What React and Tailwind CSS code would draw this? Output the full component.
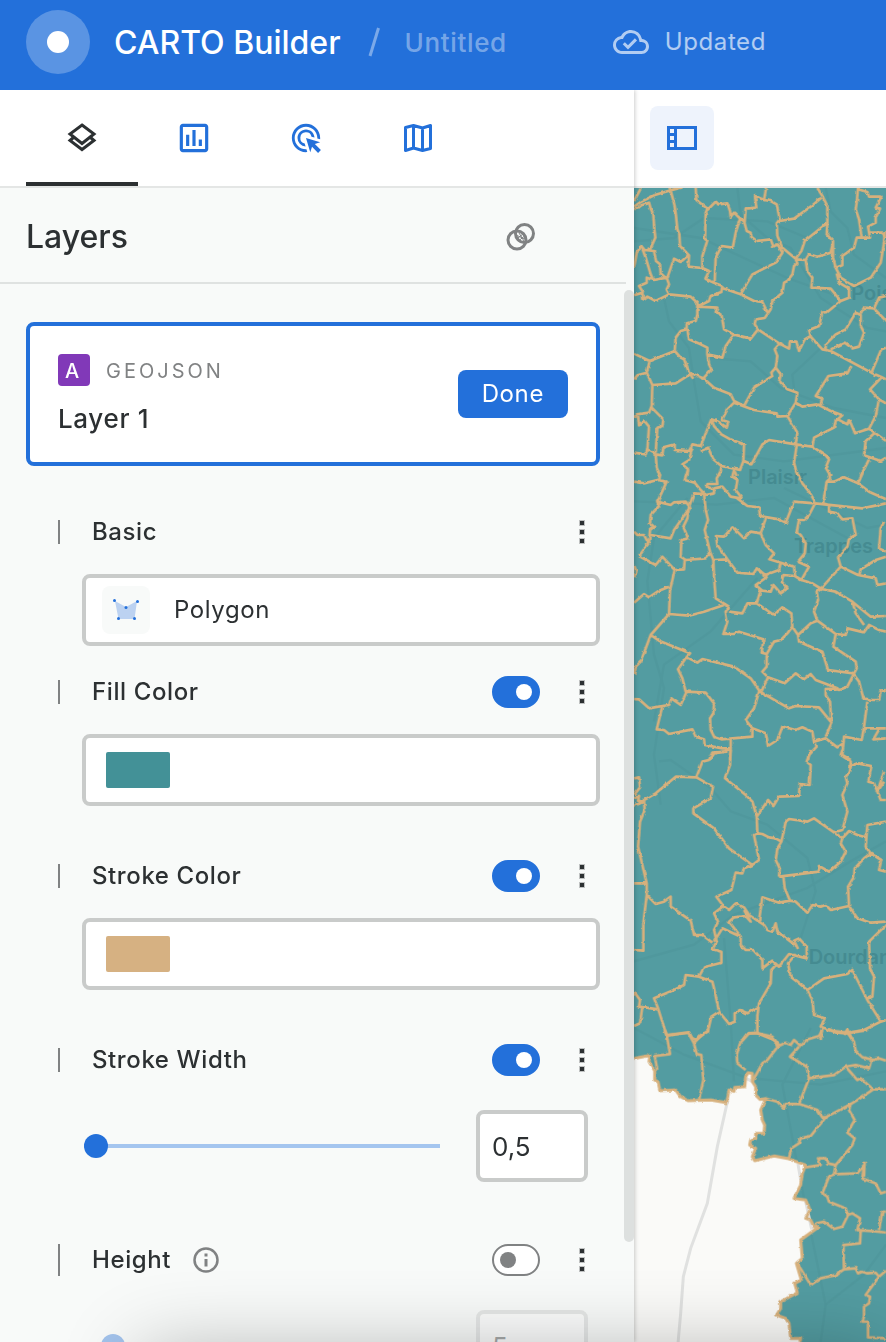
import React from "react";
import { MdAdsClick, MdOutlineCloudDone, MdOutlineAssessment } from "react-icons/md";

/* Commune outlines, grouped by map tile. Each tile has its own vertical origin. */
const TILES = [
  {
    y: -6,
    d: `M0,45 L20,8 M0,70 L12,66 22,58 45,50 50,68 58,85 60,120 64,155 48,190 40,188
M0,62 L20,48 60,28 105,14 145,4 M110,14 L122,60 126,90 130,130 136,145 138,180 165,208 163,242 205,246 225,255 214,278 240,290 265,300
M22,180 L35,215 50,265 58,282 M0,245 L8,200 22,180 32,192 60,195 66,225 78,235 80,262 98,278
M0,328 L25,320 28,340 40,332 65,345 105,325 170,332 190,350 190,385 185,405 158,412 158,430 140,435 125,455 122,495 47,525 0,503
M28,320 L15,300 38,290 38,275 60,282 98,275 105,295 98,310 105,325 M98,280 L120,218 140,228 163,208
M185,6 L187,42 220,68 215,80 213,160 220,163 205,210 205,242
M220,72 L247,45 252,55 280,52 288,75 290,92 300,80 318,98 305,140 296,185 263,180 245,215 242,285
M310,90 L332,108 335,68 367,65 363,30 390,42 396,6 M390,42 L410,45 428,55 437,100 428,112 430,150 445,185 485,218
M328,98 L338,135 350,140 352,152 368,165 410,160 418,182 430,175 445,200 425,230 355,265 340,290 320,325
M437,105 L480,98 530,62 562,35 M550,6 L565,30 580,60 580,110 578,145 597,165 597,215 605,245 620,275 660,300 710,275 740,230 750,170 752,135
M578,112 L512,165 502,195 485,218 M672,6 L668,50 665,70 675,100 683,155 M672,10 L700,18 705,32 742,32 725,65 738,68 725,95 725,110 702,122 708,155 668,155 660,185 625,210 625,238 605,245
M708,140 L745,140 756,155 M485,220 L515,222 525,205 550,212 590,200 597,170 M515,222 L520,255 535,275 532,305 590,308 620,345 645,335 645,308 615,290 608,262
M485,220 L490,232 480,240 475,265 460,285 450,290 445,320 415,345 410,370 400,385 M265,300 L262,318 230,330 225,345 205,355 190,360
M262,305 L320,325 360,345 385,348 402,382 392,396 365,400 362,415 372,430 M190,362 L250,365 245,378 262,385 270,430 298,445 350,458 372,430 435,472 465,488 468,466 487,467 495,495 512,460 530,450 525,432 555,420 565,380 580,378 620,345
M160,430 L165,460 200,475 220,485 220,505 265,515 275,480 300,445 M220,505 L225,535 232,550 210,575 M122,495 L140,515 150,520 165,560 178,578
M47,525 L38,560 55,597 125,592 172,562 210,578 240,605 290,625 300,645 330,660 360,605 415,570 412,560 425,545 430,510 422,490 435,475
M425,545 L440,565 436,585 460,610 490,620 485,650 460,690 430,692 428,682 360,672 300,650 M0,580 L10,568 38,560 M55,597 L53,660 45,680 8,685 0,695
M53,665 L88,700 85,720 70,725 65,800 M12,690 L15,718 30,703 45,722 40,790 65,805 68,845 78,870 M0,800 L35,805 40,788
M65,805 L85,808 88,784 122,775 122,792 165,795 175,775 200,780 232,700 240,720 262,745 285,758 330,775 328,825 318,852 262,840 238,820 222,785 200,795
M232,700 L255,708 278,725 283,708 264,702 280,670 300,650 M175,785 L165,822 145,835 162,850 160,870 M262,845 L255,870 M300,852 L308,870
M330,825 L352,835 385,775 405,762 485,775 490,740 475,715 460,690 M485,775 L535,782 575,808 585,820 575,845 590,870 M488,778 L480,830 490,870
M485,650 L505,662 550,655 590,675 625,688 605,705 600,725 540,755 535,782 M528,450 L565,490 590,495 712,560 740,572 756,580
M575,490 L575,475 605,445 635,430 665,380 680,387 680,420 690,440 675,482 655,487 632,470 590,490 M680,382 L690,365 720,367 756,405 M720,367 L735,335 756,330
M652,540 L640,562 583,570 545,630 565,638 558,660 M712,560 L742,490 756,485 M742,575 L708,610 735,640 725,690 705,728 663,742 645,700 640,715 612,700
M735,640 L756,652 M705,728 L756,765 M725,738 L695,765 690,808 740,825 756,815 M705,820 L680,870`,
  },
  {
    y: 846,
    d: `M0,35 L30,40 70,30 98,35 75,85 70,95 75,108 50,135 48,160 60,170 48,180 45,218 15,258 M70,0 L78,15 75,35 M162,0 L152,30 182,38 200,60 215,75 240,70 240,58 218,50 220,42 250,42 248,25 262,0
M240,55 L265,50 290,80 320,85 M300,0 L295,20 310,30 305,60 322,82 310,85 340,108 375,112 378,138 435,148 455,158 480,95 543,100
M485,0 L505,40 525,65 543,95 M543,100 L685,115 756,100 M543,100 L525,135 510,150 495,150 488,185 500,195 515,220 512,250 492,275
M583,0 L588,25 578,35 567,100 585,105 585,125 610,130 625,148 655,145 665,195 645,205 640,230 612,262 620,290 575,340 560,357
M580,35 L600,35 630,22 672,40 690,0 M672,40 L705,65 756,88 M70,95 L110,105 120,97 155,95 168,112 120,180 110,205 50,195
M210,72 L180,70 165,110 160,145 148,170 162,205 142,210 140,260 155,270 215,265 228,250 M210,72 L215,120 222,150 212,180 228,245 238,270 240,320 245,385 285,410
M270,405 L210,425 165,437 105,432 108,360 122,300 150,298 152,270 M122,300 L85,260 65,285 15,258 M0,185 L10,195 30,195 42,218 M0,398 L30,372 45,382 75,362 105,350
M105,432 L50,495 20,575 5,590 0,612 M0,285 L7,305 0,322 M240,270 L280,268 310,308 358,312 368,295 400,320
M280,268 L250,225 246,198 270,200 295,172 310,185 330,205 350,185 380,190 395,225 420,250 406,268 440,278 435,300 385,318 M380,190 L395,145
M440,278 L480,290 483,318 502,330 525,290 492,275 M400,320 L365,345 385,362 410,365 418,345 440,370 460,355 443,335 448,315 483,318 502,330 535,340 562,357
M380,360 L368,400 340,400 325,430 285,425 M368,400 L420,435 445,412 472,430 475,470 492,495 530,460 550,452 605,492 635,495 640,475 690,487 705,465 735,480 756,485
M562,357 L548,365 552,390 540,425 550,452 M562,357 L605,365 655,395 665,430 690,465 M655,395 L710,440 756,438 M620,290 L672,315 725,325 730,345 756,340
M675,318 L680,298 725,270 756,260 M750,155 L740,175 735,235 756,245 M285,410 L275,425 280,455 268,492 300,492 315,485 388,508 383,548 398,552 420,515 440,510 460,490 475,470
M398,552 L398,590 385,605 402,622 382,665 M402,622 L452,640 485,610 510,628 530,612 545,630 610,655 575,657 575,675 588,695 592,760 575,800
M492,495 L495,515 565,545 582,600 658,610 M605,492 L598,530 620,545 665,575 668,595 655,620 640,650 615,660 592,652 M658,612 L675,635 688,685 715,690 735,690 740,662 756,660
M700,695 L690,770 683,810 630,800 625,855 650,870 M690,775 L756,775 M735,778 L718,808 756,805 M50,495 L75,512 168,550 155,565 132,598 145,625 155,665 215,668 240,700 238,730 228,745 230,780 240,800 262,808 355,800 355,775 335,750 360,715 375,665
M155,560 L190,578 205,567 300,590 350,625 378,665 465,715 485,708 555,712 590,755 M0,687 L15,688 45,715 85,708 105,705 112,685 140,705 160,660 M85,708 L68,778 90,780 105,792 175,778 185,800 210,808 212,825 265,835 290,835 290,808
M228,870 L240,850 270,845 290,835 288,870 M355,775 L395,790 402,828 430,810 445,770 485,780 505,772 535,785 540,815 575,805 610,832 628,820 M545,820 L548,830 525,855 522,870`,
  },
  {
    y: 1686,
    d: `M290,0 L288,45 273,85 335,135 355,155 368,200 370,250 360,255 375,330 355,345 285,295 240,235 178,190 178,175 230,145 237,110 187,82 125,80 65,130 30,150
M280,5 L235,8 225,30 205,35 187,82 M30,150 L32,180 18,215 12,290 38,400 38,435 28,520 28,602 0,600 M0,400 L38,400 M0,85 L15,82 18,112 0,135 M0,145 L15,138 12,152 28,155 0,168
M530,0 L518,35 530,45 527,105 497,102 495,138 435,140 418,168 402,150 368,200 M370,250 L385,252 405,262 425,265 442,275 455,215 465,207 520,215 540,205 600,247 625,265 620,280 635,305 620,335 585,365 555,348 555,365 435,380
M435,380 L437,355 425,330 430,295 442,275 M448,378 L452,415 468,452 435,458 385,442 375,512 M468,452 L485,455 520,488 535,465 560,470 575,465 590,480 645,468 642,410 660,380 662,355 690,325 710,310 695,290 700,225 756,215
M645,468 L670,505 710,518 756,515 M756,525 L705,575 708,655 720,680 715,740 695,748 M625,0 L620,15 650,35 648,65 635,80 640,100 625,135 640,185 625,240 600,247
M648,50 L670,40 712,48 703,95 720,100 730,125 750,65 M730,125 L750,95 M730,125 L740,150 756,150 M625,265 L645,243 670,255 695,262 M710,310 L742,330 735,360 756,365
M355,345 L330,355 325,370 305,368 292,420 247,440 268,468 285,480 305,460 330,472 345,495 375,515 390,525 400,540 415,545 425,520 430,545 490,590 M268,468 L240,490 252,515 240,540 248,575 235,598 262,605 262,638 210,652 195,680
M38,435 L65,462 90,455 110,440 110,470 170,512 180,555 205,555 235,578 M240,575 L265,535 320,560 285,515 300,502 335,498 350,515 330,480 M320,560 L320,585 335,600 358,600 385,630 385,655 415,632 435,650 465,612 518,625 518,590 495,565 480,572 492,597
M485,612 L462,640 470,680 520,720 535,750 540,795 572,805 560,830 610,848 635,850 690,840 740,815 700,750 655,660 640,672 570,685 520,720 M740,815 L756,810
M430,640 L412,660 410,700 375,760 370,800 370,850 340,850 325,870 M370,850 L420,870 M370,772 L340,790 318,780 302,790 302,815 285,822 255,785 232,800 222,842 187,870 175,865 165,847 98,857
M195,680 L155,675 150,705 120,720 60,745 72,775 98,857 98,870 M195,680 L235,695 240,715 255,785 M0,725 L18,750 15,770 72,778 M25,770 L18,820 0,828 M565,830 L560,870 M630,855 L640,838 655,870`,
  },
  {
    y: 2526,
    d: `M92,0 L98,15 108,72 62,78 70,120 M98,15 L163,8 180,40 200,15 225,3 M180,40 L188,72 202,75 208,150 195,210 M318,40 L345,10 365,8 415,20 435,45 400,90 385,100 355,155 M318,40 L308,75 310,100 335,120
M415,20 L430,50 455,38 470,45 480,30 500,48 520,28 555,18 565,0 M495,50 L468,80 518,110 525,145 495,222 M525,145 L600,135 635,110 670,150 680,145 718,178 670,210 650,222 575,262 530,318 500,325 495,340 472,355 465,385
M392,205 L430,215 450,235 455,222 495,222 550,240 565,262 575,262 M580,0 L640,8 660,35 665,62 685,82 720,90 735,85 756,92 M635,110 L665,105 705,115 712,90 M630,10 L650,8 700,0 M718,178 L756,178
M650,222 L645,240 662,270 640,308 662,325 655,345 605,405 580,400 575,385 552,385 560,405 515,412 M605,405 L600,433 585,440 565,490 580,500 585,515 635,535 642,555 625,590 600,597 570,575 548,580 545,592
M600,433 L670,430 690,405 685,445 725,460 740,490 756,485 M692,395 L690,440 M640,555 L655,550 678,565 670,600 735,605 756,608 M735,600 L745,545 756,545 M680,605 L678,640 628,645 630,718 605,735 560,745 530,765 490,700
M630,718 L665,715 672,730 685,725 700,730 725,728 735,740 756,722 M735,740 L695,795 708,800 705,820 690,830 690,860 685,875 702,875 702,922 756,925`,
  },
];

const COAST =
  "M0,85 L48,76 45,95 62,122 62,150 72,155 78,182 125,180 140,200 162,212 230,210 278,218 285,180 300,184 302,172 332,170 335,140 342,128 355,130 355,155 365,170 365,195 378,208 395,206 380,240 385,270 392,285 390,310 365,310 365,325 350,330 347,345 365,355 355,380 362,392 420,378 460,385 515,405 505,430 500,465 480,505 515,510 528,540 515,565 530,570 540,590 552,592 500,630 505,685 487,700 502,750 482,760 490,788 440,815 440,835 428,855 455,865 465,880 470,925 500,925 498,936";

const ROADS = [
  "M0,160 L120,150 210,90 400,100 520,150",
  "M310,0 L320,80 400,150 470,180 560,330 700,420 756,430",
  "M575,0 L590,70 640,120 660,200 756,270",
  "M0,120 L200,150 330,210 460,270 600,320",
  "M90,330 L105,400 165,480 180,580 200,700 300,800 450,820 756,780",
  "M230,510 L350,520 440,600 600,660 756,690",
  "M480,600 L475,560 560,480 M450,900 L700,1020 756,1010",
  "M0,940 L250,950 420,930 640,1050",
  "M160,930 L60,1050 40,1180 60,1400 90,1500 60,1700 80,1850",
  "M370,1170 L230,1330 90,1430 60,1600",
  "M75,1720 L110,1716 230,1800 290,1870 400,1910 520,2010 545,2110 500,2250",
  "M0,2320 L180,2270 300,2180 520,2100 650,2020 756,1960",
  "M270,2250 L290,2500 300,2680 M0,2520 L150,2600 340,2670 560,2690 756,2650",
  "M530,2520 L445,2690 490,2930 530,3130 575,3350 560,3462 M575,3350 L690,3260 756,3170",
];

function CommuneMap() {
  return (
    <svg className="block h-full w-full" viewBox="0 0 756 3462" preserveAspectRatio="xMinYMin slice" role="img" aria-label="Map of communes">
      <defs>
        <filter id="rough" x="0" y="0" width="100%" height="100%" colorInterpolationFilters="sRGB">
          <feTurbulence type="fractalNoise" baseFrequency="0.07" numOctaves="2" seed="4" result="n" />
          <feDisplacementMap in="SourceGraphic" in2="n" scale="8" xChannelSelector="R" yChannelSelector="G" />
        </filter>
      </defs>
      <rect width="1600" height="3600" fill="#539ca1" />
      <g fill="none" stroke="#4d949a" strokeWidth="7" opacity="0.45">
        {ROADS.map((d) => (
          <path key={d} d={d} />
        ))}
      </g>
      <g transform="translate(0 2526)">
        <path d={COAST + " L498,1000 0,1000 Z"} fill="#fafaf8" />
        <path d="M282,212 L278,225 250,350 220,520 170,655 148,740 140,850 132,940 M492,402 L500,450 M515,515 L533,598 M338,146 L354,154" fill="none" stroke="#e0e1e0" strokeWidth="9" />
      </g>
      <g fill="#458b91" fontFamily="Inter, sans-serif" fontWeight="600" fontSize="60">
        <text x="652" y="336">Poissy</text>
        <text x="342" y="888">Plaisir</text>
        <text x="480" y="1094">Trappes</text>
        <text x="524" y="2328">Dourdan</text>
      </g>
      <g fill="none" stroke="#d6b07c" strokeWidth="8" strokeLinejoin="round" filter="url(#rough)">
        {TILES.map((t) => (
          <path key={t.y} d={t.d} transform={`translate(0 ${t.y})`} />
        ))}
        <path d={COAST} strokeWidth="9" transform="translate(0 2526)" />
      </g>
    </svg>
  );
}

const LayersIcon = () => (
  <svg width="30" height="30" viewBox="0 0 30 30" fill="none" stroke="currentColor" strokeWidth="3">
    <path d="M15 3 27 12 15 21.500 3 12Z" />
    <path d="M6.500 15.500 3 18.500 15 27.500 27 18.500 23.500 15.500" />
  </svg>
);

const MapIcon = () => (
  <svg width="30" height="30" viewBox="0 0 30 30" fill="none" stroke="currentColor" strokeWidth="3" strokeLinejoin="round">
    <path d="M2.500 4.500 10.500 2.500 19.500 5 27.500 2.500V25.500L19.500 27.500 10.500 25 2.500 27.500ZM10.500 2.500V25M19.500 5V27.500" />
  </svg>
);

const PanelIcon = () => (
  <svg width="30" height="24" viewBox="0 0 30 24" fill="none" stroke="currentColor" strokeWidth="3">
    <path d="M1.500 1.500H28.500V22.500H1.500ZM8.500 1.500V22.500M1.500 8.500H8M1.500 15.500H8" />
  </svg>
);

const BlendIcon = () => (
  <svg width="30" height="30" viewBox="0 0 30 30" fill="none" stroke="currentColor" strokeWidth="3">
    <circle cx="18.500" cy="11.500" r="9" />
    <circle cx="11" cy="18" r="9" />
    <path d="M11 13.500 19 17M13 11 18 19M12 16 17 12M12.500 19 18.500 14" strokeWidth="1" />
  </svg>
);

const InfoIcon = () => (
  <svg className="ml-[22px] text-[#808283]" width="26" height="26" viewBox="0 0 26 26" fill="none" stroke="currentColor" aria-hidden="true">
    <circle cx="13" cy="13" r="11.500" strokeWidth="2.500" />
    <path d="M13 12V19.500M13 6.500V9.500" strokeWidth="3" />
  </svg>
);

const PolygonIcon = () => (
  <svg width="30" height="30" viewBox="0 0 30 30">
    <path d="M4 6 15 12 26 6 23.500 24H7.500Z" fill="#bcd2f1" />
    <g fill="#2370da">
      <circle cx="3.500" cy="5.500" r="1.500" />
      <circle cx="26.500" cy="6.500" r="1.500" />
      <circle cx="15" cy="12.500" r="1.500" />
      <circle cx="7.500" cy="23.500" r="1.500" />
      <circle cx="23.500" cy="23.500" r="1.500" />
    </g>
  </svg>
);

const tabs = [
  { name: "Layers", icon: <LayersIcon /> },
  { name: "Widgets", icon: <MdOutlineAssessment size={38} /> },
  { name: "Interactions", icon: <MdAdsClick size={34} /> },
  { name: "Basemap", icon: <MapIcon /> },
];

function Row({ id, title, toggle, checked, info }) {
  return (
    <div className="flex h-8 items-center pl-8">
      <span className={`mr-8 w-0.5 bg-[#808283] ${info ? "h-8" : "h-6"}`} />
      {toggle ? (
        <label htmlFor={id} className="text-2xl font-medium tracking-wide">{title}</label>
      ) : (
        <h3 className="text-2xl font-medium tracking-wide">{title}</h3>
      )}
      {info && <InfoIcon />}
      <div className="ml-auto flex items-center">
        {toggle && (
          <input
            id={id}
            type="checkbox"
            role="switch"
            defaultChecked={checked}
            className="relative mr-[30px] h-8 w-12 appearance-none rounded-full border-2 border-[#808283] bg-white before:absolute before:top-1.5 before:left-1.5 before:size-4 before:rounded-full before:bg-[#808283] checked:border-[#2370da] checked:bg-[#2370da] checked:before:left-[22px] checked:before:bg-white"
          />
        )}
        <button type="button" aria-label={`${title} options`} className="mr-1.5 flex w-6 flex-col items-center gap-[3px]">
          <span className="size-1.5 border border-[#bfc1c1] bg-[#2c3032]" />
          <span className="size-1.5 border border-[#bfc1c1] bg-[#2c3032]" />
          <span className="size-1.5 border border-[#bfc1c1] bg-[#2c3032]" />
        </button>
      </div>
    </div>
  );
}

function Swatch({ label, color }) {
  return (
    <button type="button" aria-label={label} className="ml-14 flex h-[72px] items-center rounded-lg border-4 border-[#c9cbca] bg-white px-5">
      <span className={`h-9 w-16 rounded-xs ${color}`} />
    </button>
  );
}

function SliderRow({ label, value, text, disabled }) {
  return (
    <div className={`ml-14 flex items-center justify-between pr-3 pl-0.5 ${disabled ? "opacity-40" : ""}`}>
      <input
        type="range"
        aria-label={label}
        defaultValue={value}
        disabled={disabled}
        className="h-6 w-[356px] appearance-none bg-transparent [&::-webkit-slider-runnable-track]:h-1 [&::-webkit-slider-runnable-track]:bg-[#a4c5ef] [&::-webkit-slider-thumb]:-mt-2.5 [&::-webkit-slider-thumb]:size-6 [&::-webkit-slider-thumb]:appearance-none [&::-webkit-slider-thumb]:rounded-full [&::-webkit-slider-thumb]:bg-[#2370da]"
      />
      <input
        type="text"
        aria-label={`${label} value`}
        defaultValue={text}
        disabled={disabled}
        className="h-[72px] w-28 rounded-lg border-4 border-[#c9cbca] bg-white px-3 text-[26px]"
      />
    </div>
  );
}

export default function App() {
  return (
    <div className="relative flex h-screen flex-col overflow-hidden bg-white font-[Inter,sans-serif] text-[#2c3032]">
      <header className="relative z-20 flex h-[90px] shrink-0 items-center bg-[#2370da] px-[26px] pb-1.5 text-white">
        <span className="flex size-16 items-center justify-center rounded-full bg-white/25">
          <span className="size-[22px] rounded-full bg-white" />
        </span>
        <h1 className="ml-6 pt-0.5 text-[32px] leading-10 font-medium">CARTO Builder</h1>
        <svg className="ml-[26px] text-white/40" width="14" height="30" viewBox="0 0 14 30" aria-hidden="true">
          <path d="M11.500 1 3 29" stroke="currentColor" strokeWidth="3" />
        </svg>
        <span className="ml-6 text-[26px] font-medium tracking-wide text-white/40">Untitled</span>
        <div className="ml-[106px] flex items-center gap-4 text-white/65">
          <MdOutlineCloudDone size={36} />
          <span className="text-2xl tracking-wide">Updated</span>
        </div>
      </header>

      <div className="flex min-h-0 flex-1">
        <aside className="relative z-10 flex w-[634px] shrink-0 flex-col overflow-hidden bg-[#f8faf9] shadow-[1px_0_4px_rgba(0,0,0,0.2)]">
          <nav className="flex h-[98px] shrink-0 border-b-2 border-[#e4e6e5] bg-white px-[26px]">
            {tabs.map((t, i) => (
              <button
                key={t.name}
                type="button"
                aria-label={t.name}
                className={`flex w-28 items-center justify-center ${i === 0 ? "border-b-4 border-[#2c3032] pt-0.5" : "text-[#2370da]"}`}
              >
                {t.icon}
              </button>
            ))}
          </nav>

          <div className="mr-2 flex h-24 shrink-0 items-center justify-between border-b-2 border-[#dfe2e1] pt-[3px] pr-[90px] pl-[26px]">
            <h2 className="text-[32px] font-medium">Layers</h2>
            <button type="button" aria-label="Layer blending" className="text-[#808283]">
              <BlendIcon />
            </button>
          </div>

          <div className="relative min-h-0 flex-1">
            <div className="flex flex-col pt-[38px] pr-[34px] pl-[26px]">
              <section className="flex h-36 items-center justify-between rounded-lg border-4 border-[#2370da] bg-white px-7">
                <div>
                  <div className="flex items-center gap-4">
                    <span className="flex size-8 items-center justify-center rounded-sm bg-[#8139b8] pt-0.5 pr-1 text-xl font-medium text-white">A</span>
                    <span className="pt-0.5 text-xl tracking-[3px] text-[#808283]">GEOJSON</span>
                  </div>
                  <p className="mt-4 pt-0.5 text-[26px] leading-[30px] font-medium tracking-wide">Layer 1</p>
                </div>
                <button type="button" className="h-12 rounded-lg bg-[#2370da] px-6 text-2xl tracking-wide text-white">Done</button>
              </section>

              <div className="mt-[50px] flex flex-col gap-[26px]">
                <Row title="Basic" />
                <label className="ml-14 flex h-[72px] items-center rounded-lg border-4 border-[#c9cbca] bg-white pl-4">
                  <span className="flex size-12 items-center justify-center rounded-lg bg-[#f8faf9]">
                    <PolygonIcon />
                  </span>
                  <select aria-label="Geometry type" className="ml-6 flex-1 appearance-none bg-transparent text-2xl tracking-wide">
                    <option>Polygon</option>
                  </select>
                </label>
              </div>

              <div className="mt-[30px] flex flex-col gap-[26px]">
                <Row id="fill" title="Fill Color" toggle checked />
                <Swatch label="Fill color value" color="bg-[#439197]" />
              </div>

              <div className="mt-[54px] flex flex-col gap-[26px]">
                <Row id="stroke" title="Stroke Color" toggle checked />
                <Swatch label="Stroke color value" color="bg-[#d6b182]" />
              </div>

              <div className="mt-[54px] flex flex-col gap-[34px]">
                <Row id="width" title="Stroke Width" toggle checked />
                <SliderRow label="Stroke width" value={0} text="0,5" />
              </div>

              <div className="mt-[62px] flex flex-col gap-[34px]">
                <Row id="height" title="Height" toggle info />
                <SliderRow label="Height" value={5} text="5" disabled />
              </div>
            </div>
            <div className="absolute top-1.5 right-0 bottom-[100px] w-2.5 rounded-full bg-[#dde0df]" />
          </div>
        </aside>

        <main className="flex min-w-0 flex-1 flex-col">
          <div className="flex h-[98px] shrink-0 items-center border-b-2 border-[#e4e6e5] px-4">
            <button type="button" aria-label="Toggle left panel" className="flex size-16 items-center justify-center rounded-lg bg-[#eef3fc] text-[#2370da]">
              <PanelIcon />
            </button>
          </div>
          <div className="min-h-0 flex-1 overflow-hidden">
            <CommuneMap />
          </div>
        </main>
      </div>

      <div className="pointer-events-none absolute top-full right-0 left-[140px] z-20 h-24 shadow-[0_12px_80px_rgba(0,0,0,0.3)]" />
    </div>
  );
}
